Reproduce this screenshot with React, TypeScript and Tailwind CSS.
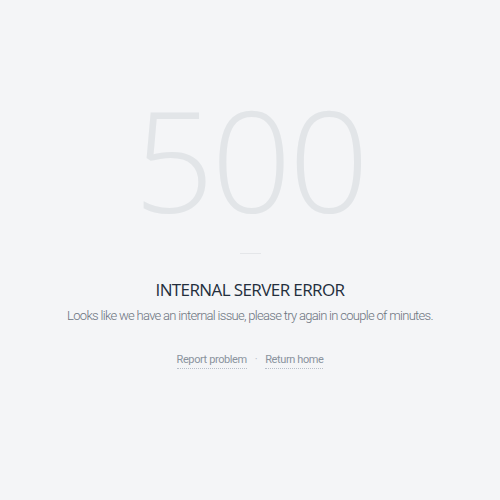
export default function App() {
  return (
    <div className="w-[500px] h-[500px] bg-[#f4f5f7] flex flex-col items-center pt-[83px]">
      <div className="text-[141px] leading-[150px] font-light text-[#e2e5e8] tracking-[-3px]" style={{ fontFamily: '"Open Sans", sans-serif' }}>
        500
      </div>
      <div className="mt-[20px] w-[21px] h-px bg-[#e4e6e9]" />
      <h1 className="mt-[24px] text-[17px] leading-[24px] text-[#232e3c] tracking-[-0.6px]" style={{ fontFamily: '"Open Sans", sans-serif' }}>
        INTERNAL SERVER ERROR
      </h1>
      <p className="mt-[4px] text-[13px] leading-[20px] font-light text-[#6b737e] tracking-[-0.7px]" style={{ fontFamily: 'Roboto, sans-serif' }}>
        Looks like we have an internal issue, please try again in couple of minutes.
      </p>
      <div className="mt-[26px] flex items-center gap-[8px] text-[11px] text-[#8a939e] tracking-[-0.4px]" style={{ fontFamily: 'Roboto, sans-serif' }}>
        <a className="border-b border-dotted border-[#b7bec8] leading-[16px]">Report problem</a>
        <span className="text-[#b7bec8]">·</span>
        <a className="border-b border-dotted border-[#b7bec8] leading-[16px]">Return home</a>
      </div>
    </div>
  );
}
